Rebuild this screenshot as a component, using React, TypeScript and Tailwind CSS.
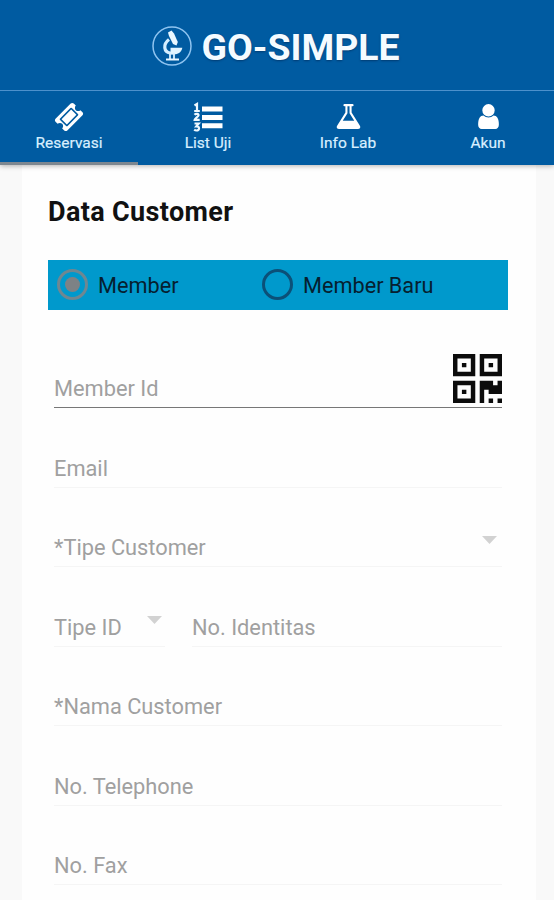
import { useState } from 'react';
import type { ReactNode } from 'react';

// Solid glyphs share the same 1792 grid
function Glyph({ d, className }: { d: string; className: string }) {
  return (
    <svg viewBox="0 0 1792 1792" fill="currentColor" className={className}>
      <path d={d} />
    </svg>
  );
}

const TICKET =
  'M1024 452l316 316-572 572-316-316zm-211 979l618-618q19-19 19-45t-19-45l-362-362q-18-18-45-18t-45 18l-618 618q-19 19-19 45t19 45l362 362q18 18 45 18t45-18zm889-637l-907 908q-37 37-90.500 37t-90.500-37l-126-126q56-56 56-136t-56-136-136-56-136 56l-125-126q-37-37-37-90.500t37-90.500l907-906q37-37 90.500-37t90.500 37l125 125q-56 56-56 136t56 136 136 56 136-56l126 125q37 37 37 90.500t-37 90.500z';
const FLASK =
  'M1591 1448q56 89 21.500 152.500t-140.500 63.500h-1152q-106 0-140.500-63.500t21.500-152.500l503-793v-399h-64q-26 0-45-19t-19-45 19-45 45-19h512q26 0 45 19t19 45-19 45-45 19h-64v399zm-779-725l-272 429h712l-272-429-20-31v-436h-128v436z';
const USER =
  'M1536 1399q0 109-62.500 187t-150.500 78h-854q-88 0-150.500-78t-62.500-187q0-85 8.500-160.500t31.500-152 58.500-131 94-89 134.500-34.500q131 128 313 128t313-128q76 0 134.500 34.500t94 89 58.500 131 31.500 152 8.500 160.500zm-256-887q0 159-112.500 271.500t-271.500 112.500-271.500-112.500-112.500-271.500 112.500-271.500 271.500-112.500 271.500 112.500 112.500 271.500z';

function MicroscopeLogo() {
  return (
    <svg viewBox="0 0 42 42" fill="none" className="size-[42px]">
      <circle cx="21" cy="21" r="19" stroke="#8fc4f0" strokeWidth="1.5" />
      <path d="M17 7.500l3.500-2 2.500 3 3.800 8.500-1.300 3.500-3.500-1.500-4-8z" fill="#e8f7ff" />
      <path d="M18 14.500c-6.500 5-5 12.500 1 13.500h4" stroke="#d4eeff" strokeWidth="3.200" />
      <path d="M19.500 22.800h11.800c-.5 3.500-3.300 6-6.800 6.500h-5z" fill="#e0f4ff" />
      <path d="M19 28v6M23 28v6" stroke="#d4eeff" strokeWidth="1.800" />
      <path d="M15 34.500h13" stroke="#e8f7ff" strokeWidth="2" />
    </svg>
  );
}

function ListIcon() {
  return (
    <svg viewBox="0 0 30 30" className="size-[30px]">
      <g fill="none" stroke="#eef8ff" strokeWidth="2.200">
        <path d="M1.500 3.500L4 2v7M1.200 9h5.600" />
        <path d="M1.500 12.800c1.500-1.600 4.500-1 4 .8-.3 1.200-3.500 2.700-3.800 4.200h5" />
        <path d="M1.500 21.500h4.200l-2.300 2.800c3.500-.2 3.500 4.400 0 4.200-.9 0-1.600-.3-2.200-.8" />
      </g>
      <path d="M9 4.500h20.500v5H9zM9 13h20.500v5H9zM9 21.300h20.500v5H9z" fill="#fff" />
    </svg>
  );
}

function QrIcon() {
  return (
    <svg viewBox="0 0 11 11" fill="#0c0c0c" className="size-[49px]">
      <path
        fillRule="evenodd"
        d="M0 0h5v5H0zM1 1v3h3V1zM6 0h5v5H6zM7 1v3h3V1zM0 6h5v5H0zM1 7v3h3V7z"
      />
      <path d="M2 2h1v1H2zM8 2h1v1H8zM2 8h1v1H2zM8 10h1v1H8zM10 10h1v1h-1z" />
      <path d="M6 6h3v1h1V6h1v3H8V8H7v3H6z" />
    </svg>
  );
}

function Caret() {
  return (
    <svg viewBox="0 0 15 8" className="w-[15px] h-2">
      <path d="M0 0h15L7.500 8z" fill="#d2d2d2" />
    </svg>
  );
}

function Field({
  label,
  icon,
  className = '',
  line = 'border-[#f5f5f5]',
}: {
  label: string;
  icon?: ReactNode;
  className?: string;
  line?: string;
}) {
  return (
    <div className={`flex h-[55px] items-end justify-between border-b ${line} ${className}`}>
      <span className="pb-1 text-[21.8px] leading-7 text-[#a0a0a0] whitespace-nowrap">{label}</span>
      {icon}
    </div>
  );
}

function Radio({ label, checked, onClick }: { label: string; checked: boolean; onClick: () => void }) {
  return (
    <button onClick={onClick} className="flex items-center gap-[10px] text-[21.7px] text-[#06202f]">
      <span
        className={`flex size-[31px] items-center justify-center rounded-full border-[3px] ${
          checked ? 'border-[#6f8791]' : 'border-[#0b5078]'
        }`}
      >
        {checked && <span className="size-[15px] rounded-full bg-[#7d8285]" />}
      </span>
      <span className="pt-[2px]">{label}</span>
    </button>
  );
}

const tabs = [
  { name: 'Reservasi', icon: <Glyph d={TICKET} className="size-[30px]" /> },
  { name: 'List Uji', icon: <ListIcon /> },
  { name: 'Info Lab', icon: <Glyph d={FLASK} className="size-[29px]" /> },
  { name: 'Akun', icon: <Glyph d={USER} className="size-[29px]" /> },
];

export default function App() {
  const [tab, setTab] = useState(0);
  const [isNew, setIsNew] = useState(false);

  return (
    <div className="h-[900px] w-[554px] overflow-hidden bg-[#f9f9f9] font-['Roboto',sans-serif]">
      {/* App bar and tabs */}
      <header className="relative h-[165px] bg-[#005ba1] text-white shadow-[0_1px_5px_rgba(0,0,0,0.3)]">
        <div className="flex h-[90px] items-center justify-center gap-2 pr-[3px] pt-[2px]">
          <MicroscopeLogo />
          <h1 className="pt-1 text-[37.4px] font-bold leading-none text-[#f5fbff] [text-shadow:0_1px_2px_rgba(0,30,70,0.5)]">
            GO-SIMPLE
          </h1>
        </div>
        <nav className="grid h-[75px] grid-cols-[138px_140px_140px_140px] border-t border-[#4d91cc]">
          {tabs.map((t, i) => (
            <button
              key={t.name}
              onClick={() => setTab(i)}
              className={`flex flex-col items-center border-b-[3px] pt-[10px] ${
                i === tab ? 'border-[#7d8790]' : 'border-transparent'
              }`}
            >
              <span className="flex h-[31px] items-center">{t.icon}</span>
              <span className="mt-px text-[15.5px] leading-5 text-[#d9efff] [-webkit-text-stroke:0.2px_#d9efff]">
                {t.name}
              </span>
            </button>
          ))}
        </nav>
      </header>

      <main className="ml-[22px] h-[735px] w-[514px] bg-[#fefefe] pl-[26px] pr-7 pt-8">
        <h2 className="text-[27px] font-bold leading-[31px] tracking-[0.36px] text-[#111]">Data Customer</h2>

        <div className="mt-8 grid h-[50px] grid-cols-[205px_1fr] items-center bg-[#0099cc] pl-[9px]">
          <Radio label="Member" checked={!isNew} onClick={() => setIsNew(false)} />
          <Radio label="Member Baru" checked={isNew} onClick={() => setIsNew(true)} />
        </div>

        {/* Customer form */}
        <div className="ml-1.5 mr-[6px] mt-[43px] flex flex-col gap-[24.5px]">
          <Field
            label="Member Id"
            line="border-[#777]"
            icon={<span className="pb-1"><QrIcon /></span>}
          />
          <Field label="Email" />
          <Field label="*Tipe Customer" icon={<span className="mb-[22px] mr-[5px]"><Caret /></span>} />
          <div className="flex gap-[27px]">
            <Field
              label="Tipe ID"
              className="w-[111px]"
              icon={<span className="mb-[22px] mr-[3px]"><Caret /></span>}
            />
            <Field label="No. Identitas" className="flex-1" />
          </div>
          <Field label="*Nama Customer" />
          <Field label="No. Telephone" />
          <Field label="No. Fax" />
        </div>
      </main>
    </div>
  );
}
